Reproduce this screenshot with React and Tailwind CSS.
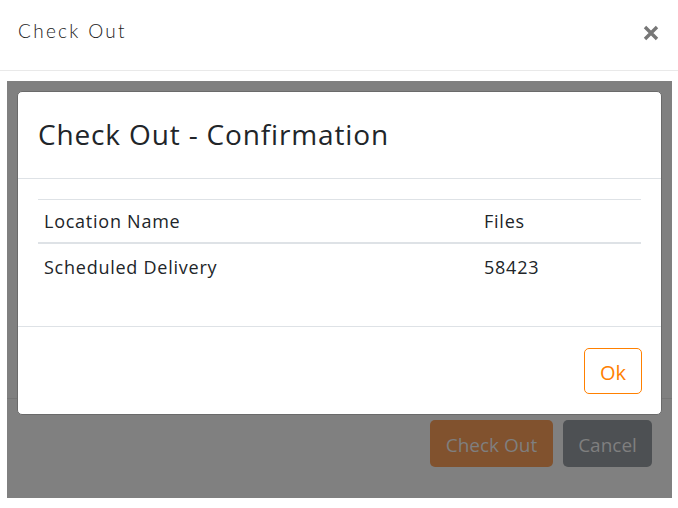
import React from 'react'

const rows = [{ name: 'Scheduled Delivery', files: 58423 }]

function CloseIcon() {
  return (
    <svg width="16" height="16" viewBox="0 0 16 16" className="text-[#777]">
      <path d="M2 2L14 14M14 2L2 14" stroke="currentColor" strokeWidth="3.4" strokeLinecap="butt" />
    </svg>
  )
}

export default function App() {
  return (
    <div className="w-[678px] h-[508px] bg-white font-['Open_Sans',sans-serif] overflow-hidden">
      {/* Page header */}
      <header className="h-[71px] border-b border-[#e9e9e9] flex items-center justify-between pl-[18px] pr-[19px]">
        <h1 className="text-[19px] font-light text-[#222] font-['Lato',sans-serif] tracking-[2.3px] -mt-[8px]">Check Out</h1>
        <button className="-mt-[4px]"><CloseIcon /></button>
      </header>

      {/* Panel under the dialog backdrop */}
      <div className="relative mt-[10px] mx-[7px] w-[665px] h-[417px] bg-[#808080]">
        <div className="h-[318px] border-b border-[#767676]" />
        <div className="flex justify-end gap-[10px] pt-[21px] pr-[20px]">
          <button className="w-[123px] h-[47px] pt-[3px] rounded-[5px] bg-[#81522e] text-[#7f7f7f] text-[19px] leading-none">Check Out</button>
          <button className="w-[89px] h-[47px] pt-[3px] rounded-[5px] bg-[#4d5053] text-[#7f7f7f] text-[19px] leading-none">Cancel</button>
        </div>

        {/* Dialog */}
        <div className="absolute left-[10px] top-[10px] w-[645px] h-[324px] bg-white rounded-[5px] border border-[#6a6a6a] flex flex-col">
          <div className="h-[87px] border-b border-[#dee2e6] flex items-center px-[20px]">
            <h2 className="text-[28px] text-[#212529] leading-none tracking-[0.85px] -mt-[3px]">Check Out - Confirmation</h2>
          </div>
          <div className="h-[148px] border-b border-[#dee2e6] px-[20px] pt-[20px]">
            <table className="w-full text-[18px] text-[#212529] tracking-[0.75px] border-collapse">
              <thead>
                <tr className="border-t border-[#dee2e6] border-b-2 border-b-[#dee2e6]">
                  <th className="text-left font-normal h-[43px] px-[6px] pt-[2px]">Location Name</th>
                  <th className="text-left font-normal w-[163px] px-[6px] pt-[2px]">Files</th>
                </tr>
              </thead>
              <tbody>
                {rows.map((r) => (
                  <tr key={r.name}>
                    <td className="h-[48px] px-[6px]">{r.name}</td>
                    <td className="px-[6px]">{r.files}</td>
                  </tr>
                ))}
              </tbody>
            </table>
          </div>
          <div className="flex-1 flex justify-end pt-[21px] pr-[19px]">
            <button className="w-[58px] h-[46px] pt-[4px] rounded-[5px] border border-[#ff8000] text-[#ff8000] text-[20px] leading-none">Ok</button>
          </div>
        </div>
      </div>
    </div>
  )
}
